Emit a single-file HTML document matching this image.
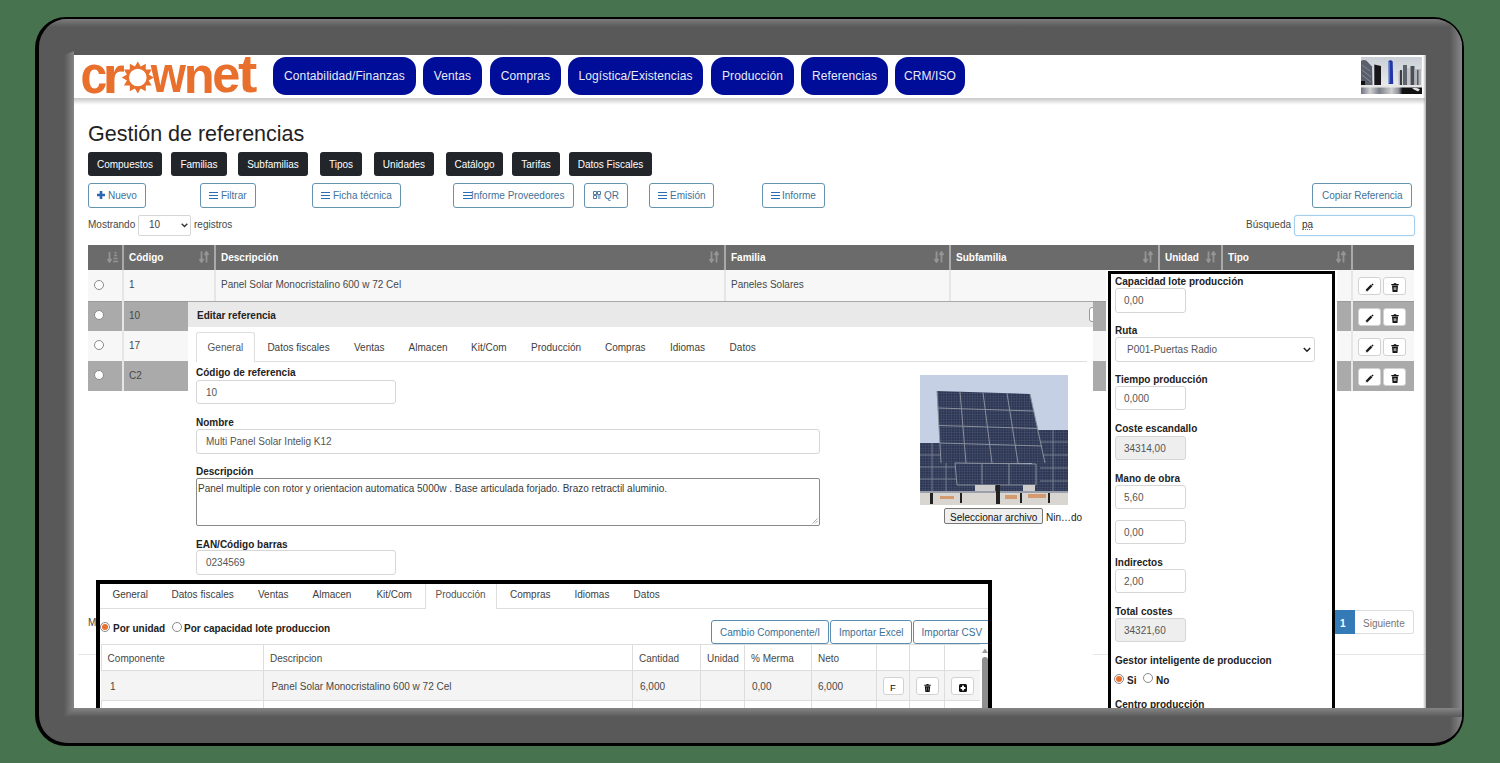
<!DOCTYPE html><html><head><meta charset="utf-8"><style>
*{box-sizing:border-box;margin:0;padding:0}
html,body{width:1500px;height:763px;overflow:hidden;background:#48734f;font-family:"Liberation Sans",sans-serif;font-size:10px;color:#474747}
.a{position:absolute}
.t{position:absolute;white-space:nowrap;line-height:12px}
.b{position:absolute;white-space:nowrap;line-height:12px;font-weight:bold;color:#222}
#fo{left:35px;top:17px;width:1429px;height:729px;border-radius:31px;background:#000}
#fg{left:39px;top:19px;width:1423px;height:724px;border-radius:28px;background:#595959;overflow:hidden}
#clip{left:74px;top:55px;width:1352px;height:653px;overflow:hidden;background:#fff}
#pg{left:-74px;top:-55px;width:1500px;height:763px}
.nav{position:absolute;top:57px;height:38px;border-radius:13px;background:#000d98;color:#e8ebf6;font-size:12px;line-height:38px;text-align:center;white-space:nowrap;letter-spacing:0.1px}
.db{position:absolute;top:152px;height:24px;border-radius:3px;background:#222529;color:#fff;line-height:26px;text-align:center;white-space:nowrap}
.ob{position:absolute;height:24px;border-radius:3px;border:1px solid #6592ad;background:#fff}
.obt{position:absolute;white-space:nowrap;line-height:12px;color:#3f7299}
.inp{position:absolute;border:1px solid #d6d6d6;border-radius:3px;background:#fff}
.dis{background:#eee}
.it{position:absolute;white-space:nowrap;line-height:12px;color:#555}
.bs{position:absolute;border:1px solid #d2d2d2;border-radius:3px;background:#fff}
.radio{position:absolute;width:10px;height:10px;border-radius:50%;border:1px solid #8a8a8a;background:#fff}
.rchk{position:absolute;width:10px;height:10px;border-radius:50%;border:1px solid #8a8a8a;background:#fff}
.rchk:after{content:"";position:absolute;left:1px;top:1px;width:6px;height:6px;border-radius:50%;background:#e8702c}
</style></head><body>
<div class="a" id="fo"></div>
<div class="a" id="fg">
<div class="a" style="left:0;top:0;width:1423px;height:8px;background:linear-gradient(#7c7c7c,#595959)"></div>
<div class="a" style="right:0;top:0;width:12px;height:724px;background:linear-gradient(90deg,#595959,#878787)"></div>
<div class="a" style="left:25px;top:32px;width:10px;height:666px;background:linear-gradient(90deg,#595959,#858585);clip-path:polygon(0 4px,100% 0,100% calc(100% - 9px),0 100%)"></div>
<div class="a" style="left:25px;top:689px;width:1418px;height:9px;background:linear-gradient(#858585,#595959);clip-path:polygon(10px 0,calc(100% - 11px) 0,100% 100%,0 100%)"></div>
</div>
<div class="a" id="clip"><div class="a" id="pg">
<div class="a" style="left:74px;top:98px;width:1351px;height:7px;background:linear-gradient(#c8c8c8,#dadada 35%,#f3f3f3 75%,#fff)"></div>
<svg class="a" style="left:0;top:0" width="300" height="100" viewBox="0 0 300 100"><g fill="#e8702c" font-family="Liberation Sans" font-weight="bold" font-size="100"><text transform="translate(80.48,92.68) scale(0.4804,0.5182)">c</text><text transform="translate(102.47,92.70) scale(0.5742,0.5130)">r</text><text transform="translate(150.70,92.40) scale(0.4526,0.5226)">w</text><text transform="translate(183.80,92.60) scale(0.5072,0.5167)">n</text><text transform="translate(212.28,92.49) scale(0.5042,0.5145)">e</text><text transform="translate(238.02,92.37) scale(0.5806,0.5273)">t</text><path fill-rule="evenodd" d="M137.80,61.50 L140.72,66.59 L145.80,63.64 L145.79,69.51 L151.66,69.50 L148.71,74.58 L153.80,77.50 L148.71,80.42 L151.66,85.50 L145.79,85.49 L145.80,91.36 L140.72,88.41 L137.80,93.50 L134.88,88.41 L129.80,91.36 L129.81,85.49 L123.94,85.50 L126.89,80.42 L121.80,77.50 L126.89,74.58 L123.94,69.50 L129.81,69.51 L129.80,63.64 L134.88,66.59 Z M146.60000000000002,77.5 A8.8,8.8 0 1,0 129.0,77.5 A8.8,8.8 0 1,0 146.60000000000002,77.5 Z"/></g></svg>
<div class="nav" style="left:273px;width:143px">Contabilidad/Finanzas</div>
<div class="nav" style="left:423px;width:59px">Ventas</div>
<div class="nav" style="left:490px;width:71px">Compras</div>
<div class="nav" style="left:568px;width:135px">Logística/Existencias</div>
<div class="nav" style="left:711px;width:83px">Producción</div>
<div class="nav" style="left:801px;width:87px">Referencias</div>
<div class="nav" style="left:895px;width:70px">CRM/ISO</div>
<svg class="a" style="left:1361px;top:57px" width="61" height="37" viewBox="0 0 61 37">
<defs><linearGradient id="sky" x1="0" y1="0" x2="0" y2="1"><stop offset="0" stop-color="#c9cfd6"/><stop offset="1" stop-color="#f2f2f2"/></linearGradient>
<linearGradient id="wat" x1="0" y1="0" x2="1" y2="0"><stop offset="0" stop-color="#6d7380"/><stop offset=".15" stop-color="#d0d0d0"/><stop offset=".3" stop-color="#7b808a"/><stop offset=".5" stop-color="#cfcfcf"/><stop offset=".62" stop-color="#8a8f98"/><stop offset=".68" stop-color="#111"/></linearGradient></defs>
<rect width="61" height="37" fill="url(#sky)"/>
<path d="M0 4 Q2.5 2.2 5.5 3.8 L11 9.5 L11.5 28 L0 28 Z" fill="#5a5f6c"/>
<path d="M1 8l8 6M1 13l9 7M1 18l9 7" stroke="#8a8e98" stroke-width="0.9"/>
<path d="M0 24h4v4H0z" fill="#111"/>
<path d="M13.3 7.5 L20 9 L20 28 L13.3 28Z" fill="#17171a"/>
<path d="M27.3 4.5 Q29.5 2 31.7 4.5 L32.2 27 L27.6 27Z" fill="#2435a8"/>
<path d="M28 5v21" stroke="#8fb4d8" stroke-width="1"/>
<path d="M37.5 14h4v14h-4z" fill="#b9b9bb"/><path d="M39 13h2v15h-2z" fill="#3a3d46"/>
<path d="M42 8h4v20h-4z" fill="#5f636c"/>
<path d="M46 11h3.5v17H46z" fill="#c4c4c6"/>
<path d="M49.5 9h4v19h-4z" fill="#4a4e58"/>
<path d="M53.5 12h6.5v16h-6.5z" fill="#b3b4b7"/><path d="M56 13h1.5v15H56z" fill="#55585f"/>
<rect x="0" y="28" width="61" height="2.5" fill="#e6e6e6"/>
<rect x="0" y="30.5" width="61" height="6.5" fill="url(#wat)"/>
<path d="M51 31.5 Q55 29.5 59 32.5 L57 34.5Z" fill="#e0e0e0"/>
</svg>
<div class="t" style="left:88px;top:122px;font-size:21.5px;line-height:24px;color:#222">Gestión de referencias</div>
<div class="db" style="left:88px;width:74px">Compuestos</div>
<div class="db" style="left:171px;width:56px">Familias</div>
<div class="db" style="left:238px;width:70px">Subfamilias</div>
<div class="db" style="left:320px;width:42px">Tipos</div>
<div class="db" style="left:374px;width:60px">Unidades</div>
<div class="db" style="left:446px;width:57px">Catálogo</div>
<div class="db" style="left:512px;width:48px">Tarifas</div>
<div class="db" style="left:569px;width:83px">Datos Fiscales</div>
<div class="ob" style="left:88px;top:183px;width:58px;height:25px"></div>
<svg class="a" style="left:97px;top:191px" width="8" height="8" viewBox="0 0 8 8"><path d="M4 0v8M0 4h8" stroke="#2a68b0" stroke-width="2.6"/></svg>
<div class="obt" style="left:108px;top:190px;">Nuevo</div>
<div class="ob" style="left:200px;top:183px;width:56px;height:25px"></div>
<svg class="a" style="left:209px;top:191px" width="9" height="8" viewBox="0 0 9 8"><path d="M0 1.5h9M0 4.5h9M0 7.5h9" stroke="#2d6db3" stroke-width="1.2"/></svg>
<div class="obt" style="left:221px;top:190px;">Filtrar</div>
<div class="ob" style="left:312px;top:183px;width:89px;height:25px"></div>
<svg class="a" style="left:321px;top:191px" width="9" height="8" viewBox="0 0 9 8"><path d="M0 1.5h9M0 4.5h9M0 7.5h9" stroke="#2d6db3" stroke-width="1.2"/></svg>
<div class="obt" style="left:333px;top:190px;">Ficha técnica</div>
<div class="ob" style="left:453px;top:183px;width:121px;height:25px"></div>
<svg class="a" style="left:463px;top:191px" width="9" height="8" viewBox="0 0 9 8"><path d="M0 1.5h9M0 4.5h9M0 7.5h9" stroke="#2d6db3" stroke-width="1.2"/></svg>
<div class="obt" style="left:471px;top:190px;">Informe Proveedores</div>
<div class="ob" style="left:584px;top:183px;width:44px;height:25px"></div>
<svg class="a" style="left:593px;top:191px" width="8" height="8" viewBox="0 0 8 8"><path d="M0.5 0.5h3v3h-3zM4.5 0.5h3v3h-3zM0.5 4.5h3v3h-3z" fill="none" stroke="#4f7d9e" stroke-width="1"/><path d="M4.5 5h3M5 7h2.5" stroke="#2f6db5" stroke-width="1"/></svg>
<div class="obt" style="left:604px;top:190px;">QR</div>
<div class="ob" style="left:649px;top:183px;width:65px;height:25px"></div>
<svg class="a" style="left:658px;top:191px" width="9" height="8" viewBox="0 0 9 8"><path d="M0 1.5h9M0 4.5h9M0 7.5h9" stroke="#2d6db3" stroke-width="1.2"/></svg>
<div class="obt" style="left:670px;top:190px;">Emisión</div>
<div class="ob" style="left:762px;top:183px;width:63px;height:25px"></div>
<svg class="a" style="left:771px;top:191px" width="9" height="8" viewBox="0 0 9 8"><path d="M0 1.5h9M0 4.5h9M0 7.5h9" stroke="#2d6db3" stroke-width="1.2"/></svg>
<div class="obt" style="left:782px;top:190px;">Informe</div>
<div class="ob" style="left:1312px;top:183px;width:100px;height:25px"></div>
<div class="obt" style="left:1322px;top:190px;">Copiar Referencia</div>
<div class="t" style="left:88px;top:219px;">Mostrando</div>
<div class="inp" style="left:138px;top:215px;width:53px;height:21px;border-radius:2px"></div>
<div class="it" style="left:149px;top:219px;color:#444">10</div>
<svg class="a" style="left:181px;top:223px" width="7" height="5" viewBox="0 0 7 5"><path d="M0.7 0.8l2.8 2.8 2.8-2.8" stroke="#333" stroke-width="1.4" fill="none"/></svg>
<div class="t" style="left:194px;top:219px;">registros</div>
<div class="t" style="left:1246px;top:219px;">Búsqueda</div>
<div class="inp" style="left:1294px;top:215px;width:121px;height:21px;border-color:#a6cfee;box-shadow:0 0 2px #cfe6f7"></div>
<div class="t" style="left:1302px;top:219px;color:#333">pa</div>
<div class="a" style="left:1302px;top:229px;width:10px;height:1px;border-top:1px dotted #777"></div>
<div class="a" style="left:88px;top:245px;width:1326px;height:25px;background:#6b6b6b"></div>
<div class="a" style="left:88px;top:270px;width:1326px;height:31px;background:#f7f7f7"></div>
<div class="a" style="left:88px;top:301px;width:1326px;height:30px;background:#aaaaaa"></div>
<div class="a" style="left:88px;top:331px;width:1326px;height:30px;background:#f7f7f7"></div>
<div class="a" style="left:88px;top:361px;width:1326px;height:30px;background:#aaaaaa"></div>
<div class="a" style="left:88px;top:301px;width:1326px;height:1px;background:#9a9a9a"></div>
<div class="a" style="left:122px;top:245px;width:2px;height:25px;background:#a9a9a9"></div>
<div class="a" style="left:122px;top:270px;width:2px;height:121px;background:#e6e6e6"></div>
<div class="a" style="left:214px;top:245px;width:2px;height:25px;background:#a9a9a9"></div>
<div class="a" style="left:214px;top:270px;width:2px;height:121px;background:#e6e6e6"></div>
<div class="a" style="left:724px;top:245px;width:2px;height:25px;background:#a9a9a9"></div>
<div class="a" style="left:724px;top:270px;width:2px;height:121px;background:#e6e6e6"></div>
<div class="a" style="left:949px;top:245px;width:2px;height:25px;background:#a9a9a9"></div>
<div class="a" style="left:949px;top:270px;width:2px;height:121px;background:#e6e6e6"></div>
<div class="a" style="left:1158px;top:245px;width:2px;height:25px;background:#a9a9a9"></div>
<div class="a" style="left:1158px;top:270px;width:2px;height:121px;background:#e6e6e6"></div>
<div class="a" style="left:1221px;top:245px;width:2px;height:25px;background:#a9a9a9"></div>
<div class="a" style="left:1221px;top:270px;width:2px;height:121px;background:#e6e6e6"></div>
<div class="a" style="left:1351px;top:245px;width:2px;height:25px;background:#a9a9a9"></div>
<div class="a" style="left:1351px;top:270px;width:2px;height:121px;background:#e6e6e6"></div>
<div class="b" style="left:129px;top:252px;color:#fff">Código</div>
<div class="b" style="left:221px;top:252px;color:#fff">Descripción</div>
<div class="b" style="left:731px;top:252px;color:#fff">Familia</div>
<div class="b" style="left:956px;top:252px;color:#fff">Subfamilia</div>
<div class="b" style="left:1165px;top:252px;color:#fff">Unidad</div>
<div class="b" style="left:1228px;top:252px;color:#fff">Tipo</div>
<svg class="a" style="left:107px;top:252px" width="11" height="11" viewBox="0 0 11 11"><path d="M2.5 0v9M0.6 7l1.9 3 1.9-3" stroke="#959595" stroke-width="1.7" fill="none"/><path d="M6 9.5h5M6.5 6.5h4M7 3.5h3M7.5 0.8h2" stroke="#959595" stroke-width="1.5"/></svg>
<svg class="a" style="left:199px;top:251px" width="10" height="12" viewBox="0 0 10 12"><path d="M2.5 0.5v9.5M0.5 8l2 3 2-3M7.5 11.5V2M5.5 4l2-3 2 3" stroke="#959595" stroke-width="1.8" fill="none"/></svg>
<svg class="a" style="left:709px;top:251px" width="10" height="12" viewBox="0 0 10 12"><path d="M2.5 0.5v9.5M0.5 8l2 3 2-3M7.5 11.5V2M5.5 4l2-3 2 3" stroke="#959595" stroke-width="1.8" fill="none"/></svg>
<svg class="a" style="left:934px;top:251px" width="10" height="12" viewBox="0 0 10 12"><path d="M2.5 0.5v9.5M0.5 8l2 3 2-3M7.5 11.5V2M5.5 4l2-3 2 3" stroke="#959595" stroke-width="1.8" fill="none"/></svg>
<svg class="a" style="left:1143px;top:251px" width="10" height="12" viewBox="0 0 10 12"><path d="M2.5 0.5v9.5M0.5 8l2 3 2-3M7.5 11.5V2M5.5 4l2-3 2 3" stroke="#959595" stroke-width="1.8" fill="none"/></svg>
<svg class="a" style="left:1206px;top:251px" width="10" height="12" viewBox="0 0 10 12"><path d="M2.5 0.5v9.5M0.5 8l2 3 2-3M7.5 11.5V2M5.5 4l2-3 2 3" stroke="#959595" stroke-width="1.8" fill="none"/></svg>
<svg class="a" style="left:1336px;top:251px" width="10" height="12" viewBox="0 0 10 12"><path d="M2.5 0.5v9.5M0.5 8l2 3 2-3M7.5 11.5V2M5.5 4l2-3 2 3" stroke="#959595" stroke-width="1.8" fill="none"/></svg>
<div class="radio" style="left:94px;top:280px"></div>
<div class="t" style="left:129px;top:279px;">1</div>
<div class="radio" style="left:94px;top:310px"></div>
<div class="t" style="left:129px;top:310px;">10</div>
<div class="radio" style="left:94px;top:340px"></div>
<div class="t" style="left:129px;top:340px;">17</div>
<div class="radio" style="left:94px;top:370px"></div>
<div class="t" style="left:129px;top:370px;">C2</div>
<div class="bs" style="left:1358px;top:277px;width:23px;height:18px"><svg class="a" style="left:6px;top:5px" width="9" height="9" viewBox="0 0 9 9"><path d="M1.4 7.6L6.6 2.4" stroke="#1a1a1a" stroke-width="2.2"/><path d="M6.4 1.4l1-1 1.2 1.2-1 1z" fill="#111"/><path d="M0.6 8.4l0.9-2.2 1.3 1.3z" fill="#444"/></svg></div>
<div class="bs" style="left:1383px;top:277px;width:23px;height:18px"><svg class="a" style="left:7px;top:5px" width="8" height="9" viewBox="0 0 8 9"><path d="M0.3 1.6h7.4" stroke="#111" stroke-width="1.2"/><path d="M2.8 0.8h2.4" stroke="#111" stroke-width="1.2"/><path d="M1 2.6h6l-0.5 5.8q0 .6-.6.6H2.1q-.6 0-.6-.6z" fill="#151515"/><path d="M2.6 4.2h2.8v2.9H2.6z" fill="#9a9a9a"/></svg></div>
<div class="bs" style="left:1358px;top:308px;width:23px;height:18px"><svg class="a" style="left:6px;top:5px" width="9" height="9" viewBox="0 0 9 9"><path d="M1.4 7.6L6.6 2.4" stroke="#1a1a1a" stroke-width="2.2"/><path d="M6.4 1.4l1-1 1.2 1.2-1 1z" fill="#111"/><path d="M0.6 8.4l0.9-2.2 1.3 1.3z" fill="#444"/></svg></div>
<div class="bs" style="left:1383px;top:308px;width:23px;height:18px"><svg class="a" style="left:7px;top:5px" width="8" height="9" viewBox="0 0 8 9"><path d="M0.3 1.6h7.4" stroke="#111" stroke-width="1.2"/><path d="M2.8 0.8h2.4" stroke="#111" stroke-width="1.2"/><path d="M1 2.6h6l-0.5 5.8q0 .6-.6.6H2.1q-.6 0-.6-.6z" fill="#151515"/><path d="M2.6 4.2h2.8v2.9H2.6z" fill="#9a9a9a"/></svg></div>
<div class="bs" style="left:1358px;top:338px;width:23px;height:18px"><svg class="a" style="left:6px;top:5px" width="9" height="9" viewBox="0 0 9 9"><path d="M1.4 7.6L6.6 2.4" stroke="#1a1a1a" stroke-width="2.2"/><path d="M6.4 1.4l1-1 1.2 1.2-1 1z" fill="#111"/><path d="M0.6 8.4l0.9-2.2 1.3 1.3z" fill="#444"/></svg></div>
<div class="bs" style="left:1383px;top:338px;width:23px;height:18px"><svg class="a" style="left:7px;top:5px" width="8" height="9" viewBox="0 0 8 9"><path d="M0.3 1.6h7.4" stroke="#111" stroke-width="1.2"/><path d="M2.8 0.8h2.4" stroke="#111" stroke-width="1.2"/><path d="M1 2.6h6l-0.5 5.8q0 .6-.6.6H2.1q-.6 0-.6-.6z" fill="#151515"/><path d="M2.6 4.2h2.8v2.9H2.6z" fill="#9a9a9a"/></svg></div>
<div class="bs" style="left:1358px;top:368px;width:23px;height:18px"><svg class="a" style="left:6px;top:5px" width="9" height="9" viewBox="0 0 9 9"><path d="M1.4 7.6L6.6 2.4" stroke="#1a1a1a" stroke-width="2.2"/><path d="M6.4 1.4l1-1 1.2 1.2-1 1z" fill="#111"/><path d="M0.6 8.4l0.9-2.2 1.3 1.3z" fill="#444"/></svg></div>
<div class="bs" style="left:1383px;top:368px;width:23px;height:18px"><svg class="a" style="left:7px;top:5px" width="8" height="9" viewBox="0 0 8 9"><path d="M0.3 1.6h7.4" stroke="#111" stroke-width="1.2"/><path d="M2.8 0.8h2.4" stroke="#111" stroke-width="1.2"/><path d="M1 2.6h6l-0.5 5.8q0 .6-.6.6H2.1q-.6 0-.6-.6z" fill="#151515"/><path d="M2.6 4.2h2.8v2.9H2.6z" fill="#9a9a9a"/></svg></div>
<div class="t" style="left:221px;top:279px;">Panel Solar Monocristalino 600 w 72 Cel</div>
<div class="t" style="left:731px;top:279px;">Paneles Solares</div>
<div class="t" style="left:88px;top:617px;">Mostrando 1 a 4 de 4 registros</div>
<div class="a" style="left:78px;top:654px;width:1348px;height:1px;background:#e6e6e6"></div>
<div class="a" style="left:1334px;top:610px;width:21px;height:24px;background:#337ab7"></div>
<div class="t" style="left:1340px;top:618px;color:#fff;font-weight:bold">1</div>
<div class="a" style="left:1355px;top:610px;width:59px;height:24px;border:1px solid #ddd;border-left:0;border-radius:0 3px 3px 0"></div>
<div class="t" style="left:1363px;top:618px;color:#777">Siguiente</div>
<div class="a" style="left:188px;top:301px;width:905px;height:420px;background:#fff;border-top:1px solid #a8a8a8"></div>
<div class="a" style="left:188px;top:302px;width:905px;height:25px;background:#e9e9e9"></div>
<div class="b" style="left:197px;top:310px;">Editar referencia</div>
<div class="a" style="left:1089px;top:307px;width:10px;height:15px;border:1px solid #999;border-radius:3px;background:#fff"></div>
<div class="a" style="left:1093px;top:302px;width:14px;height:29px;background:#aaaaaa"></div>
<div class="a" style="left:1093px;top:362px;width:14px;height:29px;background:#aaaaaa"></div>
<div class="a" style="left:197px;top:361px;width:890px;height:1px;background:#dedede"></div>
<div class="a" style="left:196px;top:332px;width:59px;height:30px;border:1px solid #dedede;border-bottom:0;border-radius:3px 3px 0 0;background:#fff"></div>
<div class="t" style="left:207.6px;top:342px;color:#555">General</div>
<div class="t" style="left:267.4px;top:342px;color:#404040">Datos fiscales</div>
<div class="t" style="left:354px;top:342px;color:#404040">Ventas</div>
<div class="t" style="left:408.6px;top:342px;color:#404040">Almacen</div>
<div class="t" style="left:471px;top:342px;color:#404040">Kit/Com</div>
<div class="t" style="left:531px;top:342px;color:#404040">Producción</div>
<div class="t" style="left:605px;top:342px;color:#404040">Compras</div>
<div class="t" style="left:670px;top:342px;color:#404040">Idiomas</div>
<div class="t" style="left:729.6px;top:342px;color:#404040">Datos</div>
<div class="b" style="left:196px;top:367px;">Código de referencia</div>
<div class="inp" style="left:196px;top:380px;width:200px;height:24px"></div>
<div class="it" style="left:206px;top:387px;">10</div>
<div class="b" style="left:196px;top:417px;">Nombre</div>
<div class="inp" style="left:196px;top:429px;width:624px;height:25px"></div>
<div class="it" style="left:206px;top:436px;">Multi Panel Solar Intelig K12</div>
<div class="b" style="left:196px;top:466px;">Descripción</div>
<div class="inp" style="left:196px;top:478px;width:624px;height:48px;border-color:#8a8a8a;border-radius:2px"></div>
<div class="t" style="left:198px;top:483px;color:#3a3a3a">Panel multiple con rotor y orientacion automatica 5000w . Base articulada forjado. Brazo retractil aluminio.</div>
<svg class="a" style="left:812px;top:518px" width="6" height="6" viewBox="0 0 6 6"><path d="M5.5 0.5L0.5 5.5M5.5 3L3 5.5" stroke="#999" stroke-width="0.8"/></svg>
<div class="b" style="left:196px;top:539px;">EAN/Código barras</div>
<div class="inp" style="left:196px;top:550px;width:200px;height:25px"></div>
<div class="it" style="left:206px;top:557px;">0234569</div>
<svg class="a" style="left:920px;top:375px" width="148" height="130" viewBox="0 0 148 130">
<defs><pattern id="cel" width="2.6" height="2.6" patternUnits="userSpaceOnUse"><rect width="2.6" height="2.6" fill="#2b3450"/><path d="M0 0.3h2.6M0.3 0v2.6" stroke="#4a5574" stroke-width="0.6"/></pattern></defs><rect width="148" height="130" fill="#c6d0e4"/>
<path d="M0 68h40v50H0z" fill="url(#cel)"/>
<path d="M0 80h40M0 92h40M0 104h40M12 68v50M26 68v50" stroke="#7e8595" stroke-width="0.9"/>
<path d="M112 55h36v63h-36z" fill="url(#cel)"/><path d="M38 100h80v18H38z" fill="url(#cel)"/>
<path d="M120 67h28M120 80h28M120 93h28M120 106h28M133 55v63" stroke="#7e8595" stroke-width="0.9"/>
<path d="M17 16L110 19L125 88L21 88Z" fill="url(#cel)"/>
<g stroke="#8b909c" stroke-width="1">
<path d="M18 33L114 36M19 50.5L118 53.5M20 68L122 71M17 16L21 88M40 16.7L46 88M63 17.4L72 88M87 18.2L98 88M110 19L125 88"/>
</g>
<path d="M35 88L116 89L116 110L37 110Z" fill="url(#cel)"/>
<path d="M35 88L116 89L116 110L37 110Z M62 88.5v21M89 89v21" stroke="#8b909c" stroke-width="1" fill="none"/>
<path d="M0 117h148v13H0z" fill="#d9d6d2"/>
<path d="M55 110h20v7H55zM103 110h12v7h-12z" fill="#cdcdcd"/><path d="M0 116h148v2H0z" fill="#9aa0ab"/>
<path d="M10 118h3v11h-3zM40 118h2v10h-2zM76 110h4v19h-4zM100 118h2v10h-2zM128 118h2v10h-2z" fill="#222"/>
<path d="M20 121h14v3H20zM85 120h12v4H85zM108 119h18v4h-18z" fill="#d59a6e"/>
</svg>
<div class="a" style="left:944px;top:508px;width:99px;height:16px;border:1px solid #777;border-radius:2px;background:#efefef"></div>
<div class="t" style="left:950px;top:512px;color:#111">Seleccionar archivo</div>
<div class="t" style="left:1046px;top:512px;color:#222">Nin…do</div>
<div class="a" style="left:1106px;top:270px;width:231px;height:121px;background:#fff"></div><div class="a" style="left:1111px;top:274px;width:221px;height:450px;background:#fff"></div>
<div class="b" style="left:1115px;top:276px;">Capacidad lote producción</div>
<div class="inp" style="left:1115px;top:288px;width:71px;height:25px"></div>
<div class="it" style="left:1124px;top:295px;">0,00</div>
<div class="b" style="left:1115px;top:325px;">Ruta</div>
<div class="inp" style="left:1115px;top:337px;width:200px;height:25px"></div>
<div class="it" style="left:1127px;top:344px;">P001-Puertas Radio</div>
<svg class="a" style="left:1303px;top:347px" width="8" height="6" viewBox="0 0 8 6"><path d="M0.8 1l3.2 3.2 3.2-3.2" stroke="#222" stroke-width="1.5" fill="none"/></svg>
<div class="b" style="left:1115px;top:374px;">Tiempo producción</div>
<div class="inp" style="left:1115px;top:386px;width:71px;height:24px"></div>
<div class="it" style="left:1124px;top:393px;">0,000</div>
<div class="b" style="left:1115px;top:423px;">Coste escandallo</div>
<div class="inp dis" style="left:1115px;top:436px;width:71px;height:24px"></div>
<div class="it" style="left:1124px;top:443px;">34314,00</div>
<div class="b" style="left:1115px;top:473px;">Mano de obra</div>
<div class="inp" style="left:1115px;top:485px;width:71px;height:24px"></div>
<div class="it" style="left:1124px;top:492px;">5,60</div>
<div class="inp" style="left:1115px;top:520px;width:71px;height:24px"></div>
<div class="it" style="left:1124px;top:527px;">0,00</div>
<div class="b" style="left:1115px;top:557px;">Indirectos</div>
<div class="inp" style="left:1115px;top:569px;width:71px;height:24px"></div>
<div class="it" style="left:1124px;top:576px;">2,00</div>
<div class="b" style="left:1115px;top:606px;">Total costes</div>
<div class="inp dis" style="left:1115px;top:618px;width:71px;height:24px"></div>
<div class="it" style="left:1124px;top:625px;">34321,60</div>
<div class="b" style="left:1115px;top:655px;">Gestor inteligente de produccion</div>
<div class="rchk" style="left:1114px;top:674px"></div>
<div class="b" style="left:1127px;top:675px;">Si</div>
<div class="radio" style="left:1143px;top:673px"></div>
<div class="b" style="left:1156px;top:675px;">No</div>
<div class="b" style="left:1115px;top:699px;">Centro producción</div>
<div class="a" style="left:1108px;top:271px;width:3px;height:450px;background:#000"></div>
<div class="a" style="left:1332px;top:271px;width:3px;height:450px;background:#000"></div>
<div class="a" style="left:1108px;top:271px;width:227px;height:3px;background:#000"></div>
<div class="a" style="left:100px;top:584px;width:888px;height:140px;background:#fff"></div>
<div class="a" style="left:100px;top:608px;width:888px;height:1px;background:#dedede"></div>
<div class="a" style="left:425px;top:583px;width:72px;height:26px;border:1px solid #dedede;border-bottom:0;border-top:0;background:#fff"></div>
<div class="t" style="left:112.4px;top:589px;color:#404040">General</div>
<div class="t" style="left:171.5px;top:589px;color:#404040">Datos fiscales</div>
<div class="t" style="left:258px;top:589px;color:#404040">Ventas</div>
<div class="t" style="left:312.5px;top:589px;color:#404040">Almacen</div>
<div class="t" style="left:376.4px;top:589px;color:#404040">Kit/Com</div>
<div class="t" style="left:435.5px;top:589px;color:#555">Producción</div>
<div class="t" style="left:510px;top:589px;color:#404040">Compras</div>
<div class="t" style="left:574.4px;top:589px;color:#404040">Idiomas</div>
<div class="t" style="left:633.6px;top:589px;color:#404040">Datos</div>
<div class="rchk" style="left:100px;top:622px"></div>
<div class="b" style="left:113px;top:623px;">Por unidad</div>
<div class="radio" style="left:172px;top:622px"></div>
<div class="b" style="left:184px;top:623px;">Por capacidad lote produccion</div>
<div class="ob" style="left:711px;top:620px;width:118px;height:24px;border-color:#5a8db0"></div>
<div class="t" style="left:720px;top:627px;color:#3a6f98">Cambio Componente/I</div>
<div class="ob" style="left:830px;top:620px;width:82px;height:24px;border-color:#5a8db0"></div>
<div class="t" style="left:839px;top:627px;color:#3a6f98">Importar Excel</div>
<div class="ob" style="left:913px;top:620px;width:77px;height:24px;border-color:#5a8db0"></div>
<div class="t" style="left:921.6px;top:627px;color:#3a6f98">Importar CSV</div>
<div class="a" style="left:101px;top:644px;width:879px;height:70px;border-top:1px solid #ddd;border-left:1px solid #ddd"></div>
<div class="a" style="left:101px;top:670px;width:879px;height:31px;background:#f4f4f4;border-top:1px solid #ddd;border-bottom:1px solid #ddd"></div>
<div class="a" style="left:263px;top:644px;width:1px;height:70px;background:#ddd"></div>
<div class="a" style="left:632px;top:644px;width:1px;height:70px;background:#ddd"></div>
<div class="a" style="left:700px;top:644px;width:1px;height:70px;background:#ddd"></div>
<div class="a" style="left:744px;top:644px;width:1px;height:70px;background:#ddd"></div>
<div class="a" style="left:811px;top:644px;width:1px;height:70px;background:#ddd"></div>
<div class="a" style="left:876px;top:644px;width:1px;height:70px;background:#ddd"></div>
<div class="a" style="left:909px;top:644px;width:1px;height:70px;background:#ddd"></div>
<div class="a" style="left:944px;top:644px;width:1px;height:70px;background:#ddd"></div>
<div class="t" style="left:107.6px;top:653px;">Componente</div>
<div class="t" style="left:270px;top:653px;">Descripcion</div>
<div class="t" style="left:639px;top:653px;">Cantidad</div>
<div class="t" style="left:707px;top:653px;">Unidad</div>
<div class="t" style="left:751px;top:653px;">% Merma</div>
<div class="t" style="left:818px;top:653px;">Neto</div>
<div class="t" style="left:110px;top:681px;">1</div>
<div class="t" style="left:271.4px;top:681px;">Panel Solar Monocristalino 600 w 72 Cel</div>
<div class="t" style="left:640px;top:681px;">6,000</div>
<div class="t" style="left:752px;top:681px;">0,00</div>
<div class="t" style="left:818px;top:681px;">6,000</div>
<div class="bs" style="left:883px;top:677px;width:21px;height:18px"></div>
<div class="t" style="left:890px;top:682px;color:#111;font-size:9.5px">F</div>
<div class="bs" style="left:916px;top:677px;width:23px;height:18px"><svg class="a" style="left:7px;top:6px" width="7" height="8" viewBox="0 0 7 8"><path d="M0.2 1.3h6.6M2.4 0.6h2.2" stroke="#111" stroke-width="1.1"/><path d="M0.8 2.2h5.4l-0.5 5.2q0 .5-.5.5H1.8q-.5 0-.5-.5z" fill="#111"/><path d="M2.5 3.5v3M4.5 3.5v3" stroke="#888" stroke-width="0.7"/></svg></div>
<div class="bs" style="left:951px;top:677px;width:23px;height:18px"><svg class="a" style="left:7px;top:6px" width="8" height="8" viewBox="0 0 8 8"><rect width="8" height="8" rx="1.5" fill="#111"/><path d="M4 1.6v4.8M1.6 4h4.8" stroke="#fff" stroke-width="1.8"/></svg></div>
<svg class="a" style="left:982px;top:648px" width="6" height="5" viewBox="0 0 6 5"><path d="M0 5L3 0.5L6 5z" fill="#9a9a9a"/></svg>
<div class="a" style="left:982px;top:657px;width:6px;height:60px;background:#8f8f8f;border-radius:3px 3px 0 0"></div>
<div class="a" style="left:96px;top:580px;width:4px;height:140px;background:#000"></div>
<div class="a" style="left:988px;top:580px;width:4px;height:140px;background:#000"></div>
<div class="a" style="left:96px;top:580px;width:896px;height:4px;background:#000"></div>
<div class="a" style="left:1423px;top:55px;width:3px;height:653px;background:linear-gradient(90deg,rgba(160,160,160,0),rgba(140,140,140,.7))"></div>
</div></div>
</body></html>
